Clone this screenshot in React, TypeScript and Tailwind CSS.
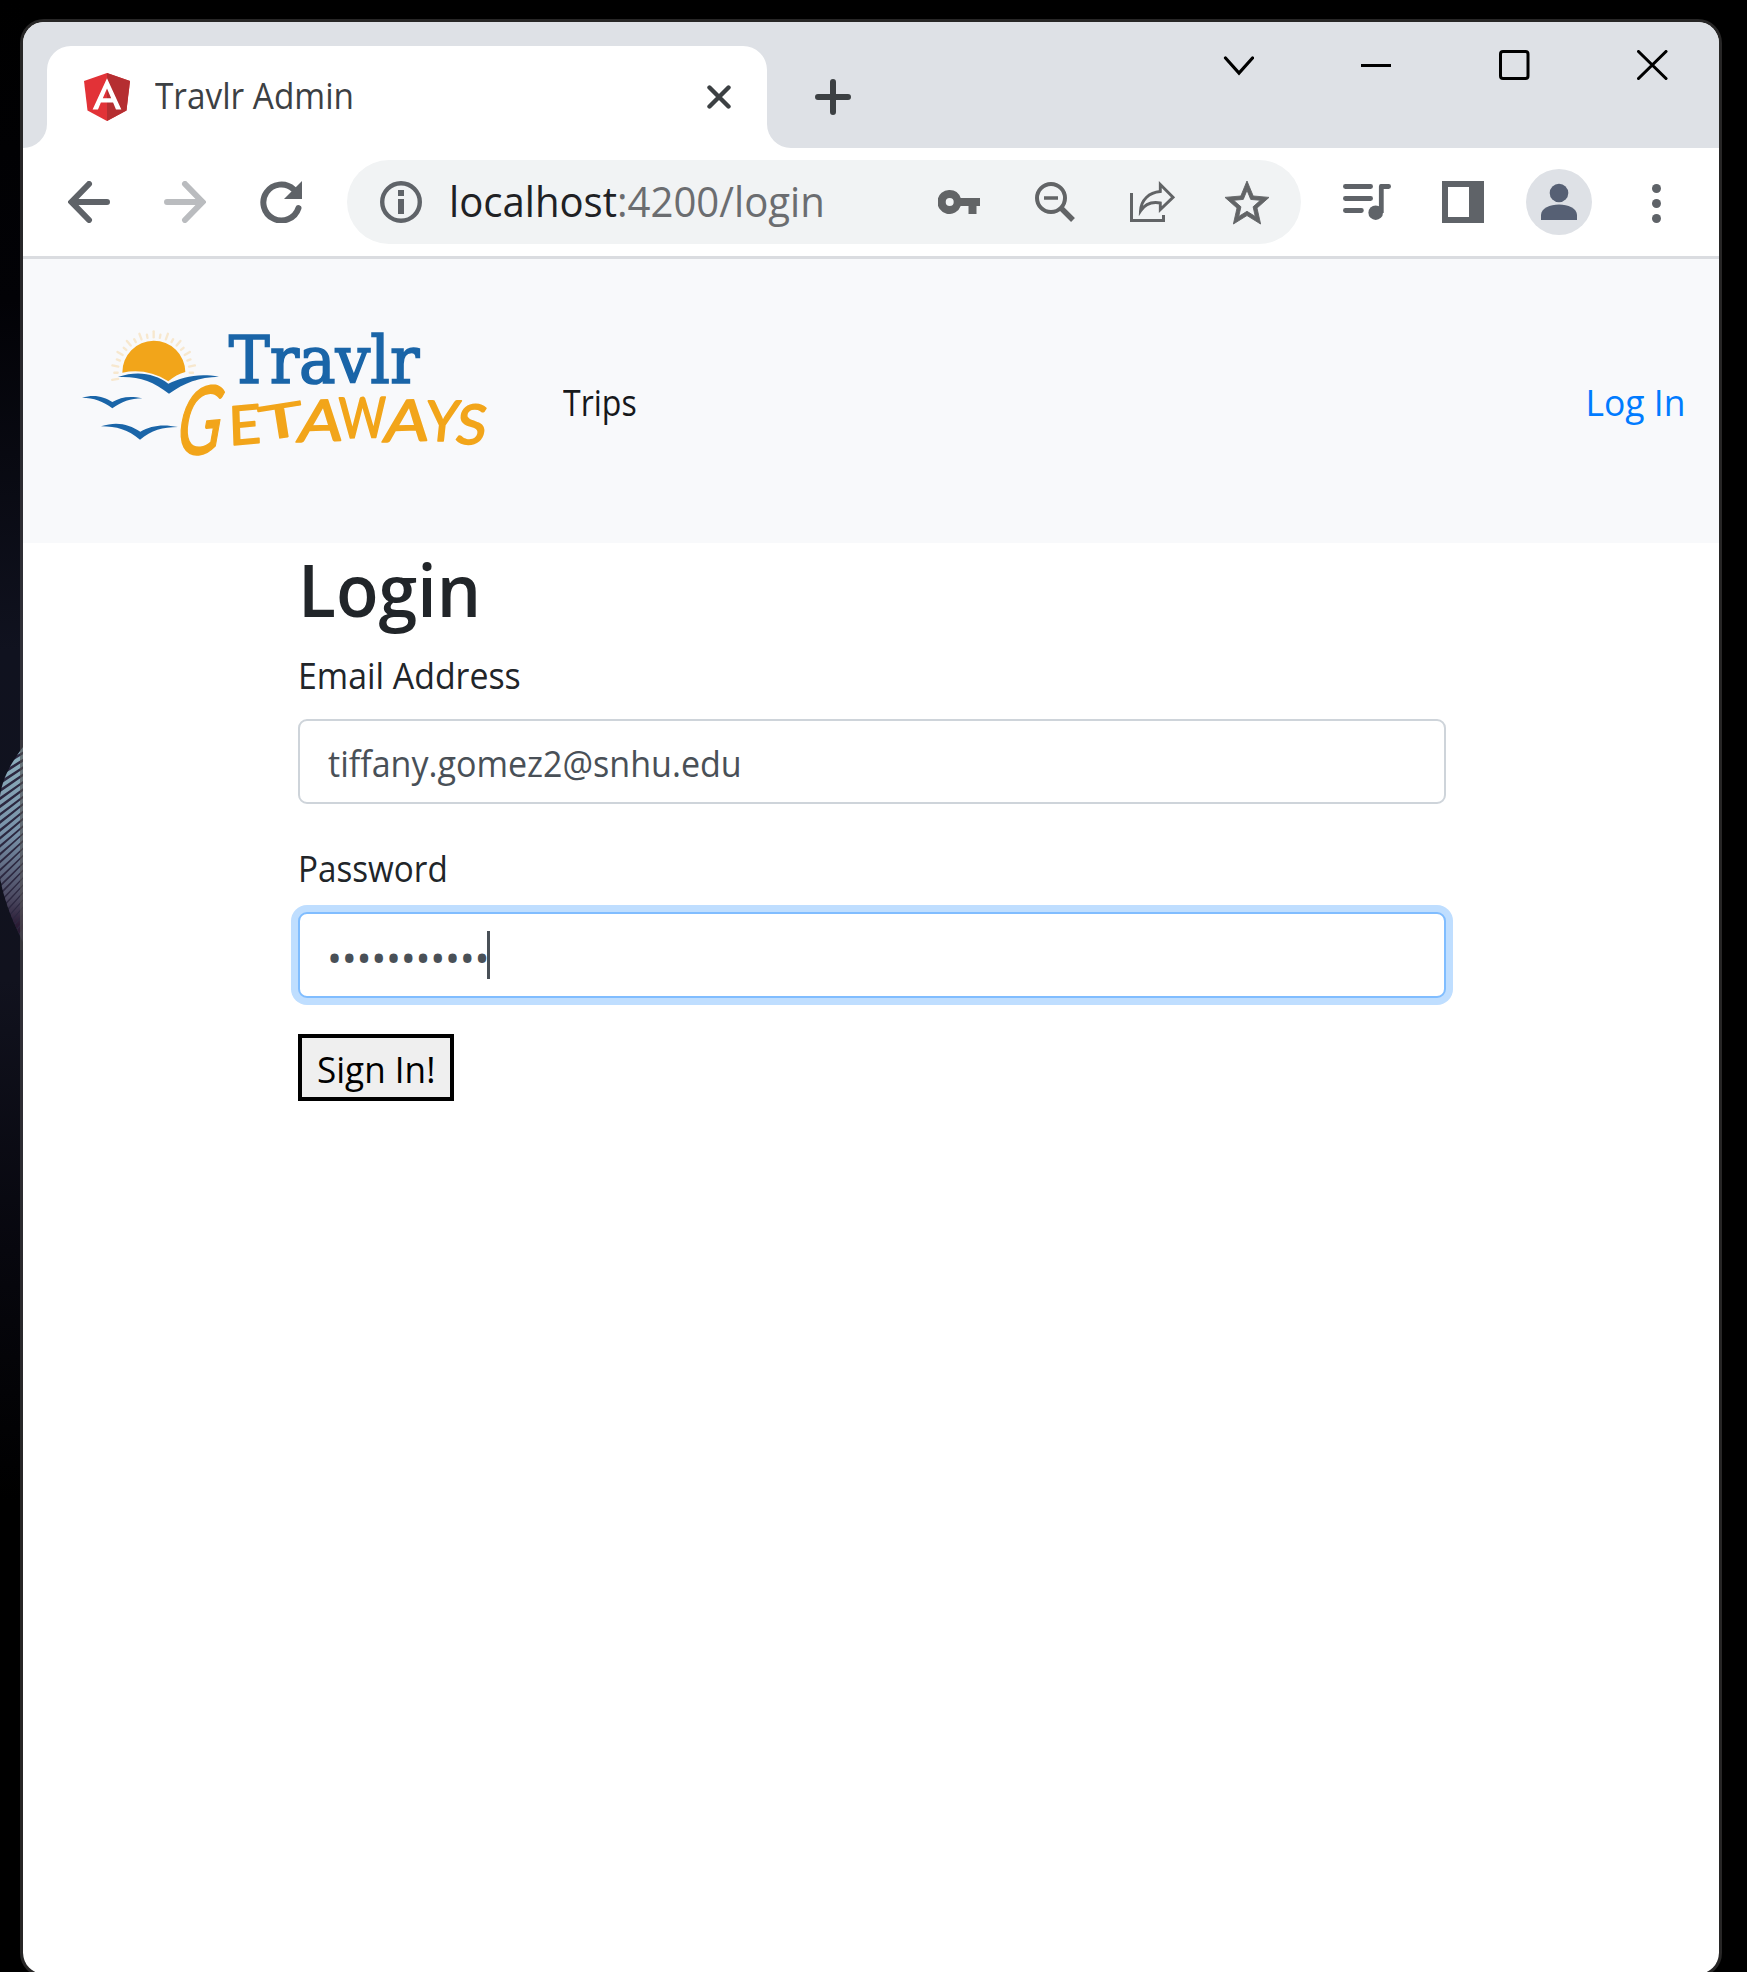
import type { ReactNode } from "react";

function Favicon() {
  return (
    <svg className="h-12 w-[46px] shrink-0" viewBox="31.9 30 186.2 200" preserveAspectRatio="none">
      <path fill="#e23237" d="M125 30 31.9 63.2 46.1 186.3 125 230l78.9-43.7 14.2-123.1z" />
      <path fill="#b52e31" d="M125 30v200l78.9-43.7 14.2-123.1z" />
      <path
        fill="#fff"
        d="M125 52.1 66.8 182.6h21.7l11.7-29.2h49.4l11.7 29.2H183L125 52.1zm17 83.3h-34l17-40.9z"
      />
    </svg>
  );
}

function TabStrip() {
  return (
    <div className="flex h-[126px] items-end bg-[#dee1e6]">
      <div className="h-6 w-6 bg-white">
        <div className="h-6 w-6 rounded-br-[24px] bg-[#dee1e6]" />
      </div>
      <div className="flex h-[102px] w-[720px] items-start rounded-t-[24px] bg-white pt-[27px] pl-[37px]">
        <Favicon />
        <div className="ml-[25px] w-[552px] pt-[3px]">
          <span className="inline-block origin-left scale-x-[0.926] text-[36px] leading-[40px] whitespace-nowrap text-[#3c4043]">
            Travlr Admin
          </span>
        </div>
        <svg className="mt-3 h-6 w-6" viewBox="0 0 24 24" stroke="#3c4043" strokeWidth="4.4" strokeLinecap="round">
          <path d="M2.5 2.5l19 19M21.5 2.5l-19 19" />
        </svg>
      </div>
      <div className="h-6 w-6 bg-white">
        <div className="h-6 w-6 rounded-bl-[24px] bg-[#dee1e6]" />
      </div>
      <svg className="mb-[33px] ml-6 h-9 w-9" viewBox="0 0 36 36" stroke="#3c4043" strokeWidth="6" strokeLinecap="round">
        <path d="M3 18h30M18 3v30" />
      </svg>
      <div className="mb-[68px] ml-auto flex items-center gap-[107px] pr-[51px]">
        <svg className="h-[30px] w-[31px]" viewBox="0 0 31 30" fill="none" stroke="#000" strokeWidth="3.2" strokeLinecap="round">
          <path d="M2.5 8L16 23 29.500 8" />
        </svg>
        <svg className="h-[30px] w-[31px]" viewBox="0 0 31 30">
          <path d="M0 14h30v3H0z" />
        </svg>
        <svg className="h-[30px] w-[31px]" viewBox="0 0 31 30" fill="none" stroke="#000" strokeWidth="3">
          <rect x="1.5" y="1.5" width="27.5" height="27" rx="2.5" />
        </svg>
        <svg className="h-[30px] w-[31px]" viewBox="0 0 31 30" stroke="#000" strokeWidth="3.1" strokeLinecap="round">
          <path d="M1.5 1.5l27.5 27M29 1.5L1.5 28.5" />
        </svg>
      </div>
    </div>
  );
}

function AddressBar() {
  return (
    <div className="ml-[45px] flex h-[84px] w-[954px] shrink-0 items-center rounded-full bg-[#f1f3f4] pl-[33px] text-[#5f6368]">
      <svg className="h-[42px] w-[42px] shrink-0" viewBox="0 0 42 42">
        <circle cx="21" cy="21" r="18.8" fill="none" stroke="currentColor" strokeWidth="4.4" />
        <path fill="currentColor" d="M18 9h6v6h-6zM18 18h6v15h-6z" />
      </svg>
      <div className="ml-[27px] w-[489px] pb-[2px]">
        <span className="inline-block origin-left scale-x-[0.955] text-[42px] leading-[60px] whitespace-nowrap text-[#202124]">
          localhost<span className="text-[#6b6d70]">:4200/login</span>
        </span>
      </div>
      <svg className="h-6 w-[42px] shrink-0" viewBox="0 0 42 24" fill="#626466" fillRule="evenodd">
        <path d="M11.7 0a12 12 0 0 1 11 8H42v8h-3.500v8h-8v-8h-7.800a12 12 0 1 1-11-16zm0 8a4 4 0 1 0 0 8 4 4 0 0 0 0-8z" />
      </svg>
      <svg className="ml-[55px] h-[42px] w-[42px] shrink-0" viewBox="0 0 42 42" fill="none" stroke="#626466">
        <circle cx="16" cy="17" r="14" strokeWidth="4" />
        <path strokeWidth="3.6" d="M9 17h14" />
        <path strokeWidth="5.4" d="M26 27l12 12" />
      </svg>
      <svg className="ml-[53px] h-[42px] w-[45px] shrink-0" viewBox="0 0 45 42" fill="none" stroke="#626466">
        <path strokeWidth="3" d="M1.500 12v27.500H33.500V34" />
        <path strokeWidth="2.9" d="M30.300 3.500 43 16.300 30.300 28.500v-6.500C22 20.500 15 23 10.500 30 11 19 19 11.300 30.300 10.500z" />
      </svg>
      <svg
        className="ml-[50px] h-[43px] w-[44px] shrink-0 overflow-visible"
        viewBox="2 2 20 19"
        preserveAspectRatio="none"
        fill="#626466"
        stroke="#626466"
        strokeWidth=".4"
      >
        <path d="M22 9.240l-7.190-.620L12 2 9.190 8.630 2 9.240l5.460 4.730L5.820 21 12 17.270 18.180 21l-1.630-7.030L22 9.240zM12 15.400l-3.760 2.270 1-4.280-3.320-2.880 4.380-.380L12 6.100l1.710 4.040 4.380.380-3.320 2.880 1 4.280L12 15.400z" />
      </svg>
    </div>
  );
}

function Toolbar() {
  return (
    <div className="flex h-[111px] items-center border-b-[3px] border-[#dadce0] bg-white pl-[45px] text-[#5f6368]">
      <svg className="h-[42px] w-[42px] shrink-0" viewBox="0 0 42 42" fill="none" stroke="currentColor" strokeWidth="6" strokeLinecap="round">
        <path d="M39 21H5M21 3L3.500 21 21 39" />
      </svg>
      <svg className="ml-[54px] h-[42px] w-[42px] shrink-0" viewBox="0 0 42 42" fill="none" stroke="#babcbf" strokeWidth="6" strokeLinecap="round">
        <path d="M3 21h34M21 3l17.500 18L21 39" />
      </svg>
      <svg className="ml-[54px] h-[42px] w-[42px] shrink-0" viewBox="0 0 42 42" fill="none">
        <path stroke="currentColor" strokeWidth="6" strokeLinecap="round" d="M38.500 27A18 18 0 1 1 33.500 8.200" />
        <path fill="currentColor" d="M42 0v18H24z" />
      </svg>
      <AddressBar />
      <svg className="ml-[42px] h-[42px] w-[48px] shrink-0" viewBox="0 0 48 42" fill="none" stroke="currentColor" strokeWidth="4.800">
        <path strokeLinecap="round" d="M2.400 5.500h25.200M2.400 17.500h25.200M2.400 29.500h16" />
        <path strokeLinejoin="round" d="M38.300 32V5.500h7.500" />
        <path strokeLinecap="round" d="M39 5.500h6.600" />
        <circle cx="32.700" cy="31.700" r="7.300" fill="currentColor" stroke="none" />
      </svg>
      <svg className="ml-[51px] h-[42px] w-[42px] shrink-0" viewBox="0 0 42 42">
        <path fill="currentColor" fillRule="evenodd" d="M0 0h42v42H0zM6 6v30h21V6z" />
      </svg>
      <svg className="ml-[42px] h-[66px] w-[66px] shrink-0" viewBox="0 0 66 66">
        <circle cx="33" cy="33" r="33" fill="#dee1e6" />
        <g fill="#566074">
          <circle cx="33" cy="24" r="9.300" />
          <path d="M15 51v-5c0-6.500 9-10.500 18-10.500S51 39.500 51 46v5z" />
        </g>
      </svg>
      <svg className="ml-[60px] h-[42px] w-[9px] shrink-0" viewBox="0 0 9 42" fill="currentColor">
        <circle cx="4.500" cy="7.500" r="4.500" />
        <circle cx="4.500" cy="22.500" r="4.500" />
        <circle cx="4.500" cy="37.500" r="4.500" />
      </svg>
    </div>
  );
}

const brushLetters = [
  { ch: "G", t: "translate(340 440) rotate(-6) skewX(-16) scale(.66 1)", size: 278 },
  { ch: "E", t: "translate(508 406) rotate(-5) skewX(-3) scale(1.050 1)", size: 160 },
  { ch: "T", t: "translate(606 392) rotate(-9) scale(1.450 .9)", size: 155 },
  { ch: "A", t: "translate(708 396) rotate(-2) skewX(-10) scale(1.150 1)", size: 172 },
  { ch: "W", t: "translate(838 384) rotate(-1) scale(.82 1)", size: 168 },
  { ch: "A", t: "translate(966 396) rotate(-2) skewX(-10) scale(1.150 1)", size: 172 },
  { ch: "Y", t: "translate(1092 394) skewX(-6) scale(.95 1)", size: 168 },
  { ch: "S", t: "translate(1182 402) skewX(-8) scale(1.020 1)", size: 164 },
];

const rays = Array.from({ length: 21 }, (_, i) => -9 + i * 9.9);

function Logo() {
  return (
    <svg className="h-[170px] w-[450px] shrink-0" viewBox="0 0 1350 510">
      <g stroke="#f7cf8d" strokeWidth="7" strokeLinecap="round" opacity=".4">
        {rays.map((a, i) => (
          <path key={a} d={i % 2 ? "M173 190h-10" : "M173 190h-18"} transform={`rotate(${a} 281 190)`} />
        ))}
      </g>
      <path fill="#f2a51a" d="M187 188a94 94 0 0 1 189-2c-18 5-36 14-51 28-44-28-90-36-138-26z" />
      <g fill="#1a65a8">
        <path d="M174 201c60-20 110-10 151 20 40-20 90-33 152-21-60 1-104 18-150 51-50-38-90-53-153-50z" />
        <path d="M66 263c38-11 66-3 91 13 25-14 50-20 90-11-36 1-62 10-90 30-28-22-55-31-91-32z" />
        <path d="M123 349c48-16 84-6 118 16 32-18 66-24 113-14-46 0-80 10-114 38-36-30-70-40-117-40z" />
      </g>
      <text
        x="506"
        y="219"
        textLength="572"
        lengthAdjust="spacingAndGlyphs"
        fill="#1a65a8"
        stroke="#1a65a8"
        strokeWidth="5"
        fontSize="196"
        className="font-['DejaVu_Serif',serif]"
      >
        Travlr
      </text>
      <g fill="#f2a51a" stroke="#f2a51a" strokeWidth="5" strokeLinejoin="round" className="font-['Lato',sans-serif] font-normal">
        {brushLetters.map((l, i) => (
          <text key={i} transform={l.t} fontSize={l.size}>
            {l.ch}
          </text>
        ))}
      </g>
    </svg>
  );
}

function Navbar() {
  return (
    <nav className="flex h-[284px] items-start bg-[#f8f9fb] pl-[37px]">
      <div className="mt-[51px] w-[503px]">
        <Logo />
      </div>
      <a className="mt-[117px] inline-block w-[100px] origin-left scale-x-[0.89] text-[36px] leading-[54px] text-[#16181b]">Trips</a>
      <a className="mt-[117px] mr-[34px] ml-auto inline-block origin-right scale-x-[0.985] text-[36px] leading-[54px] text-[#007bff]">
        Log In
      </a>
    </nav>
  );
}

function Label({ children, className }: { children: ReactNode; className: string }) {
  return <label className={`block origin-left text-[36px] leading-[54px] text-[#212529] ${className}`}>{children}</label>;
}

function LoginForm() {
  return (
    <form className="ml-[275px] w-[1148px] pt-px">
      <h2 className="origin-left scale-x-[0.97] text-[72px] leading-[90px] font-semibold text-[#212529]">Login</h2>
      <Label className="mt-[15px] scale-x-[0.94]">Email Address</Label>
      <div className="mt-[16px] flex h-[85px] items-center rounded-[9px] border-2 border-[#ced4da] bg-white pt-[5px] pl-[28px]">
        <span className="origin-left scale-x-[0.946] text-[36px] text-[#495057]">tiffany.gomez2@snhu.edu</span>
      </div>
      <Label className="mt-[38px] scale-x-[0.923]">Password</Label>
      <div className="mt-[16px] flex h-[86px] items-center rounded-[9px] border-2 border-[#80bdff] bg-white pl-[27px] ring-[7px] ring-[#bfdeff]">
        <span className="w-[160px] pt-[5px] text-[40px] tracking-[-0.3px] text-[#495057]">•••••••••••</span>
        <span className="h-12 w-[3px] bg-[#495057]" />
      </div>
      <button
        type="button"
        className="mt-9 flex h-[67px] w-[156px] items-center border-4 border-black bg-[#efefef] pt-[5px] pl-[15px] text-[36px] text-black"
      >
        <span className="origin-left scale-x-[0.975] whitespace-nowrap">Sign In!</span>
      </button>
    </form>
  );
}

const stripes = Array.from({ length: 25 }, (_, i) => i);

/** Ridged sphere of the desktop wallpaper, visible left of the window. */
function WallpaperSphere() {
  return (
    <svg className="absolute top-[740px] left-0 h-[210px] w-[23px]" viewBox="0 0 23 210">
      <defs>
        <clipPath id="sphere">
          <path d="M23 7C12 22 3 36 0 56v82c5 26 14 46 23 64z" />
        </clipPath>
        <linearGradient id="ridge" x1="0" y1="0" x2="0" y2="210" gradientUnits="userSpaceOnUse">
          <stop offset="0" stopColor="#8fb4c0" />
          <stop offset=".45" stopColor="#7891a8" />
          <stop offset=".75" stopColor="#4c4a62" />
          <stop offset=".88" stopColor="#2b1c35" />
          <stop offset="1" stopColor="#20152a" />
        </linearGradient>
      </defs>
      <g clipPath="url(#sphere)">
        <rect width="23" height="210" fill="#2c2840" />
        {stripes.map((i) => (
          <path
            key={i}
            d={`M-2 ${24 + i * 8}Q10 ${17 + i * 8 - i * 0.3} 25 ${8 + i * 8 - i * 0.7}`}
            fill="none"
            stroke="url(#ridge)"
            strokeWidth="3.8"
          />
        ))}
      </g>
      <rect x="20" width="3" height="210" fill="#3a3a3a" opacity=".35" />
    </svg>
  );
}

export default function App() {
  return (
    <div className="relative h-[1972px] w-[1747px] overflow-hidden bg-[linear-gradient(to_right,transparent_23px,#000_24px),linear-gradient(to_bottom,#000_0,#020206_300px,#10121f_650px,#11121e_980px,#07070e_1250px,#000_1500px)] font-['Open_Sans',sans-serif]">
      <WallpaperSphere />
      <div className="relative mt-[19px] ml-5 h-[1958px] w-[1702px] overflow-hidden rounded-[24px] border-[3px] border-[#62606066] bg-white bg-clip-padding">
        <TabStrip />
        <Toolbar />
        <Navbar />
        <LoginForm />
      </div>
    </div>
  );
}
